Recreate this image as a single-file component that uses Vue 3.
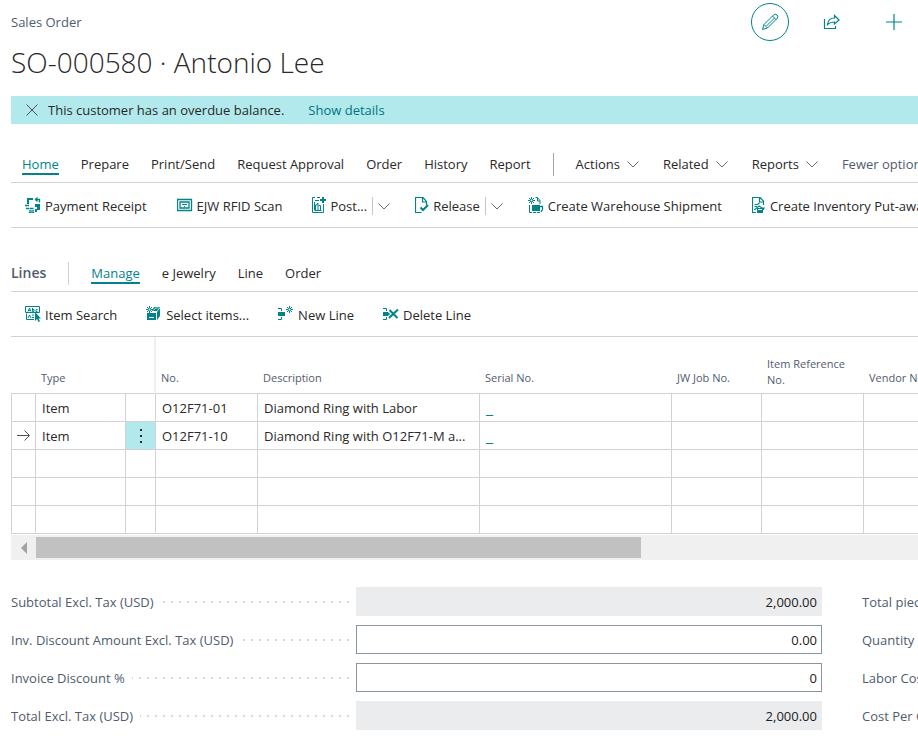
<script setup>
import { ref } from 'vue'

const ribbonTabs = ['Home', 'Prepare', 'Print/Send', 'Request Approval', 'Order', 'History', 'Report']
const ribbonMenus = ['Actions', 'Related', 'Reports']
const ribbonActions = [
  { label: 'Payment Receipt', icon: 'payment' },
  { label: 'EJW RFID Scan', icon: 'scan' },
  { label: 'Post...', icon: 'post', narrow: true, split: true },
  { label: 'Release', icon: 'release', narrow: true, split: true },
  { label: 'Create Warehouse Shipment', icon: 'shipment' },
  { label: 'Create Inventory Put-away', icon: 'putaway', narrow: true },
]
const lineTabs = ['Manage', 'e Jewelry', 'Line', 'Order']
const lineActions = [
  { label: 'Item Search', icon: 'search' },
  { label: 'Select items...', icon: 'select' },
  { label: 'New Line', icon: 'newline' },
  { label: 'Delete Line', icon: 'deleteline' },
]
const lines = [
  { type: 'Item', no: 'O12F71-01', description: 'Diamond Ring with Labor', serial: '_' },
  { type: 'Item', no: 'O12F71-10', description: 'Diamond Ring with O12F71-M a...', serial: '_', current: true },
  {}, {}, {},
]
const totals = ref([
  { id: 'subtotal', label: 'Subtotal Excl. Tax (USD)', value: '2,000.00', readonly: true },
  { id: 'inv-discount', label: 'Inv. Discount Amount Excl. Tax (USD)', value: '0.00' },
  { id: 'discount-pct', label: 'Invoice Discount %', value: '0' },
  { id: 'total', label: 'Total Excl. Tax (USD)', value: '2,000.00', readonly: true },
])
const figures = ref([
  { id: 'pieces', label: 'Total pieces', value: '', readonly: true },
  { id: 'quantity', label: 'Quantity', value: '', readonly: true },
  { id: 'labor', label: 'Labor Cost', value: '', readonly: true },
  { id: 'cost-per', label: 'Cost Per Gram', value: '', readonly: true },
])
</script>

<template>
  <svg class="sprite" aria-hidden="true">
    <symbol id="i-payment" viewBox="0 0 16 16">
      <path d="M2 1h6v2H4v4H2zM10 7h5v6h-3v2h-2v-3h2v-2h-2z" fill="currentColor" />
      <path d="M14.500 5.500v-3H10M12.500.5l-2 2 2 2M0 8.500h4M1 11.500h3M4 13.500c1 .8 4 .8 5 0M4 15.300c1 .8 4 .8 5 0M4.500 11.500h4" fill="none" stroke="currentColor" stroke-width="1.300" />
    </symbol>
    <symbol id="i-scan" viewBox="0 0 16 16">
      <path d="M.5 2.500h14v11H.5zM3 5h9v6H3z" fill="none" stroke="currentColor" stroke-width="1.300" />
      <path d="M5 7h5v1H5zM7 9h1v1H7z" fill="currentColor" />
    </symbol>
    <symbol id="i-post" viewBox="0 0 14 16">
      <path d="M3 .5H.5v15h11V7M3 3.500h4M5 .5h3M3.500 13V8h1.500V6.500h1V13M6.500 8.500h2V13M2.500 13.500h7M2.500 5v8" fill="none" stroke="currentColor" />
      <path d="M10 0h2v2h2v2h-2v2h-2V4H8V2h2z" fill="currentColor" />
    </symbol>
    <symbol id="i-release" viewBox="0 0 14 16">
      <path d="M11.500 8V4.500L8 .5H.5v15h6M7.500 1v4h4" fill="none" stroke="currentColor" stroke-width="1.200" />
      <path d="M5.500 10.500 8 13l5-5" fill="none" stroke="currentColor" stroke-width="2" />
    </symbol>
    <symbol id="i-shipment" viewBox="0 0 16 16">
      <path d="M3.500 0v7M0 3.500h7M1 1l5 5M6 1 1 6M7.500.5h2l2.500 3V7M9.500 1v3h2.500M1.500 8v7.500H4" fill="none" stroke="currentColor" />
      <path d="M4 8h8v6H4zM5 15h3v1H5zM9 15h3v1H9z" fill="currentColor" />
      <path d="M12 9.500h2.500v3L13 15" fill="none" stroke="currentColor" stroke-width="1.300" />
      <circle cx="3.500" cy="3.500" r="1" fill="#fff" />
    </symbol>
    <symbol id="i-putaway" viewBox="0 0 14 16">
      <path d="M11.500 8V4L8 .5H.5v15H4M7.500 1v4H11M2.500 7.500h3L7.500 6M2 12.500h1l4-3.500 3 2h3M2.500 9.500H5" fill="none" stroke="currentColor" stroke-width="1.200" />
      <path d="M5 11h7v2h-1v3H5z" fill="currentColor" />
      <path d="M6 12.500h4" stroke="#fff" />
    </symbol>
    <symbol id="i-search" viewBox="0 0 16 16">
      <path d="M9 13.500H1.500v-6M.5.5h14v6H.5z" fill="none" stroke="currentColor" />
      <path d="M3 5.500 4.500 2 6 5.500M3.500 4.500h2M7.500 2v3.500H9V3.500H7.500M12.500 3.500h-1.500v2h1.500M3 12l1.500-3L6 12M7 9h2M7 11.500h2" fill="none" stroke="currentColor" />
      <path d="M10 6v9l2-2 1.500 3 1.500-.8-1.500-2.700H16z" fill="currentColor" />
    </symbol>
    <symbol id="i-select" viewBox="0 0 16 16">
      <path d="M3.500 0v7M0 3.500h7M1 1l5 5M6 1 1 6" fill="none" stroke="currentColor" />
      <path d="M8 1h6l-3 4H6zM1 7h9v7H1zM11 6l3-4v8l-3 4z" fill="currentColor" />
      <path d="M3 11.500h5" stroke="#fff" />
      <path d="M7.500 4.500 9.500 2h3" fill="none" stroke="#fff" stroke-width=".7" />
      <circle cx="3.500" cy="3.500" r="1" fill="#fff" />
    </symbol>
    <symbol id="i-newline" viewBox="0 0 16 16">
      <path d="M0 2.500h3.500V5M0 13.500h3.500V11" fill="none" stroke="currentColor" />
      <path d="M0 6h7v4H0z" fill="currentColor" />
      <path d="M11.500 0v7M8 3.500h7M9 1l5 5M14 1 9 6" fill="none" stroke="currentColor" />
      <circle cx="11.500" cy="3.500" r="1" fill="#fff" />
    </symbol>
    <symbol id="i-deleteline" viewBox="0 0 16 16">
      <path d="M0 2.500h3.500V5M0 13.500h3.500V11" fill="none" stroke="currentColor" />
      <path d="M0 6h5l2 2-2 2H0z" fill="currentColor" />
      <path d="m6.500 4 8 8M15 3.500 6 12" fill="none" stroke="currentColor" stroke-width="2" />
    </symbol>
  </svg>

  <main class="page">
    <header class="top">
      <span class="caption">Sales Order</span>
      <div class="tools">
        <button class="tool ring" aria-label="Edit">
          <svg width="18" height="18" viewBox="0 0 18 18" fill="none" stroke="currentColor">
            <path d="M1.500 16.500 3 11.500 12.500 2a2.300 2.300 0 0 1 3.500 3.500L6.500 15zM3 11.500 6.500 15M11.500 3l3.500 3.500M5.500 13l8-8" />
          </svg>
        </button>
        <button class="tool" aria-label="Share">
          <svg width="18" height="16" viewBox="0 0 18 16" fill="none" stroke="currentColor" stroke-width="1.200">
            <path d="M1.500 5v9.500h11V12M4.500 10.500C5 6.500 7.500 4 11.500 4V1.500L16 6l-4.500 4V8C8.500 8 6.500 8.500 4.500 10.500z" />
          </svg>
        </button>
        <button class="tool" aria-label="New">
          <svg width="16" height="16" viewBox="0 0 16 16" fill="none" stroke="currentColor" stroke-width="1.200">
            <path d="M8 0v16M0 8h16" />
          </svg>
        </button>
      </div>
    </header>

    <h1 class="title">SO-000580 · Antonio Lee</h1>

    <div class="notice" role="status">
      <button class="dismiss" aria-label="Dismiss">
        <svg width="12" height="12" viewBox="0 0 12 12" stroke="currentColor" fill="none"><path d="m.5.5 11 11M11.500.5l-11 11" /></svg>
      </button>
      <span>This customer has an overdue balance.</span>
      <a href="#" class="details">Show details</a>
    </div>

    <nav class="tabs ribbon">
      <button v-for="(tab, i) in ribbonTabs" :key="tab" class="tab" :class="{ active: i === 0 }">{{ tab }}</button>
      <span class="divider"></span>
      <button v-for="menu in ribbonMenus" :key="menu" class="tab menu">
        {{ menu }}
        <svg class="chevron" viewBox="0 0 12 7"><path d="m.5.5 5.500 5.500L11.500.5" /></svg>
      </button>
      <button class="tab subtle">Fewer options</button>
    </nav>

    <div class="actions wide">
      <div v-for="a in ribbonActions" :key="a.label" class="action-group">
        <button class="action">
          <svg class="icon" :class="{ narrow: a.narrow }" aria-hidden="true"><use :href="'#i-' + a.icon" /></svg>{{ a.label }}
        </button>
        <button v-if="a.split" class="split" :aria-label="'More options for ' + a.label">
          <svg class="chevron" viewBox="0 0 12 7"><path d="m.5.5 5.500 5.500L11.500.5" /></svg>
        </button>
      </div>
    </div>

    <nav class="tabs lines-tabs">
      <h2 class="section">Lines</h2>
      <span class="divider light"></span>
      <button v-for="(tab, i) in lineTabs" :key="tab" class="tab" :class="{ active: i === 0 }">{{ tab }}</button>
    </nav>

    <div class="actions">
      <button v-for="a in lineActions" :key="a.label" class="action">
        <svg class="icon" aria-hidden="true"><use :href="'#i-' + a.icon" /></svg>{{ a.label }}
      </button>
    </div>

    <div class="grid-wrap">
      <table class="grid">
        <colgroup>
          <col class="c-mark"><col class="c-m"><col class="c-menu"><col class="c-l"><col class="c-desc">
          <col class="c-serial"><col class="c-m"><col class="c-l"><col>
        </colgroup>
        <thead>
          <tr>
            <th></th>
            <th>Type</th>
            <th class="frozen"></th>
            <th>No.</th>
            <th>Description</th>
            <th>Serial No.</th>
            <th>JW Job No.</th>
            <th class="wrap">Item Reference No.</th>
            <th>Vendor No.</th>
          </tr>
        </thead>
        <tbody>
          <tr v-for="(line, i) in lines" :key="i">
            <td class="mark">
              <svg v-if="line.current" width="14" height="12" viewBox="0 0 14 12" fill="none" stroke="#505050"><path d="M0 5.500h12.500M7.500.5l5 5-5 5" /></svg>
            </td>
            <td>{{ line.type }}</td>
            <td class="more" :class="{ on: line.current }">
              <button v-if="line.current" class="dots" aria-label="Show more options">
                <svg width="4" height="16" viewBox="0 0 4 16" fill="currentColor"><path d="M1 1h2v2H1zM1 7h2v2H1zM1 13h2v2H1z" /></svg>
              </button>
            </td>
            <td>{{ line.no }}</td>
            <td>{{ line.description }}</td>
            <td><a v-if="line.serial" class="serial" href="#">{{ line.serial }}</a></td>
            <td></td>
            <td></td>
            <td></td>
          </tr>
        </tbody>
      </table>
    </div>
    <div class="scrollbar">
      <button class="scroll-left" aria-label="Scroll left">
        <svg width="6" height="12" viewBox="0 0 6 12"><path d="M6 0v12L0 6z" fill="#a3a3a3" /></svg>
      </button>
      <div class="thumb"></div>
    </div>

    <form class="totals" @submit.prevent>
      <div v-for="(group, g) in [totals, figures]" :key="g" class="column">
        <div v-for="f in group" :key="f.id" class="field">
          <label :for="f.id">{{ f.label }}</label>
          <span class="leader"></span>
          <input :id="f.id" v-model="f.value" type="text" :readonly="f.readonly">
        </div>
      </div>
    </form>
  </main>
</template>

<style>
body {
  background: #fff;
  overflow: hidden;
}
</style>

<style scoped>
.sprite {
  position: absolute;
  width: 0;
  height: 0;
}
.page {
  padding-left: 11px;
  overflow: hidden;
  color: #292929;
  font: 13px/20px "Open Sans", "Noto Sans", sans-serif;
  white-space: nowrap;
}
button {
  padding: 0;
  border: 0;
  background: none;
  color: inherit;
  font: inherit;
  white-space: nowrap;
  cursor: pointer;
}
a {
  color: #00757c;
  text-decoration: none;
}
.top {
  display: flex;
  justify-content: space-between;
  align-items: center;
  height: 44px;
  padding-right: 5px;
}
.caption {
  color: #505c6d;
}
.tools {
  display: flex;
  gap: 24px;
}
.tool {
  display: flex;
  align-items: center;
  justify-content: center;
  width: 38px;
  height: 38px;
  color: #008489;
}
.ring {
  border: 1px solid #008489;
  border-radius: 50%;
}
.title {
  margin: 0;
  height: 52px;
  font-size: 28px;
  line-height: 36px;
  font-weight: 300;
}
.notice {
  display: flex;
  align-items: center;
  height: 28px;
  padding-left: 15px;
  background: #b2e9ec;
}
.dismiss {
  display: flex;
  margin-right: 10px;
  color: #505050;
}
.details {
  margin-left: 24px;
}
.tabs {
  display: flex;
  align-items: center;
  gap: 22px;
  padding-left: 11px;
  border-bottom: 1px solid #d0d2d6;
}
.ribbon {
  height: 36px;
  padding-top: 22px;
}
.lines-tabs {
  height: 36px;
  margin-top: 27px;
  padding-left: 0;
}
.tab {
  flex: none;
  padding-top: 2px;
  border-bottom: 2px solid transparent;
  line-height: 18px;
}
.tab.active {
  border-color: #008489;
  color: #008489;
}
.menu {
  display: flex;
  align-items: center;
  gap: 7px;
  padding-right: 2px;
}
.subtle {
  color: #505c6d;
}
.chevron {
  width: 12px;
  height: 7px;
  fill: none;
  stroke: #6b6b6b;
}
.divider {
  flex: none;
  width: 1px;
  height: 23px;
  background: #a0a6b1;
}
.divider.light {
  background: #d0d2d6;
}
.section {
  margin: 0;
  color: #505c6d;
  font-size: 14px;
  line-height: 20px;
  font-weight: 600;
}
.actions {
  display: flex;
  align-items: center;
  gap: 24px;
  box-sizing: border-box;
  height: 45px;
  padding: 2px 0 0 14px;
  border-bottom: 1px solid #d0d2d6;
}
.actions.wide {
  gap: 25px;
}
.action-group {
  display: flex;
  align-items: center;
  flex: none;
}
.action {
  display: flex;
  align-items: center;
  flex: none;
  gap: 4px;
  margin-right: 5px;
}
.icon {
  width: 16px;
  height: 16px;
  margin-bottom: 2px;
  color: #008489;
}
.icon.narrow {
  width: 14px;
}
.split {
  display: flex;
  align-items: center;
  height: 18px;
  padding-left: 5px;
  border-left: 1px solid #c4c6ca;
}
.grid-wrap {
  overflow: hidden;
}
.grid {
  width: 100%;
  min-width: 954px;
  border-collapse: separate;
  border-spacing: 0;
  table-layout: fixed;
}
.grid thead {
  color: #505c6d;
}
.c-mark { width: 25px; }
.c-menu { width: 30px; }
.c-m { width: 90px; }
.c-l { width: 102px; }
.c-desc { width: 222px; }
.c-serial { width: 192px; }
th {
  box-sizing: border-box;
  height: 57px;
  padding: 0 6px 7px 5px;
  border-bottom: 1px solid #d0d2d6;
  font-size: 11px;
  line-height: 16px;
  font-weight: 400;
  text-align: left;
  vertical-align: bottom;
}
th.wrap {
  padding-bottom: 5px;
  white-space: normal;
}
th.frozen {
  border-right: 2px solid #f0f0f0;
}
td {
  height: 27px;
  padding: 0 6px;
  border-right: 1px solid #d0d2d6;
  border-bottom: 1px solid #d0d2d6;
  overflow: hidden;
  text-overflow: ellipsis;
}
td.mark,
td.more {
  padding: 0;
  text-align: center;
}
td.mark {
  border-left: 1px solid #d0d2d6;
}
td.on {
  background: #b2e9ec;
}
.serial {
  display: block;
  color: #008489;
  font-size: 16px;
}
.mark svg,
.dots,
.dots svg {
  display: block;
  margin: 0 auto;
}
.scrollbar {
  display: flex;
  align-items: center;
  height: 25px;
  margin-top: 1px;
  background: #f0f0f0;
}
.scroll-left {
  display: flex;
  justify-content: center;
  width: 25px;
}
.thumb {
  width: calc(200% / 3);
  height: 21px;
  background: #c1c1c1;
}
.totals {
  display: grid;
  grid-template-columns: repeat(2, minmax(811px, 1fr));
  gap: 40px;
  padding-top: 27px;
}
.column {
  display: grid;
  gap: 9px;
}
.field {
  display: grid;
  grid-template-columns: auto 1fr calc(100% - 345px);
  align-items: center;
  height: 29px;
  color: #505c6d;
}
.leader {
  height: 2px;
  margin: 0 7px;
  background: repeating-linear-gradient(to left, #d6d6d6 0 2px, transparent 2px 8px);
}
input {
  box-sizing: border-box;
  width: 100%;
  height: 29px;
  padding: 0 4px;
  border: 1px solid #8b94a3;
  border-radius: 0;
  background: #fff;
  color: #212121;
  font: inherit;
  text-align: right;
}
input:read-only {
  border-color: #ebecee;
  background: #ebecee;
}
</style>
